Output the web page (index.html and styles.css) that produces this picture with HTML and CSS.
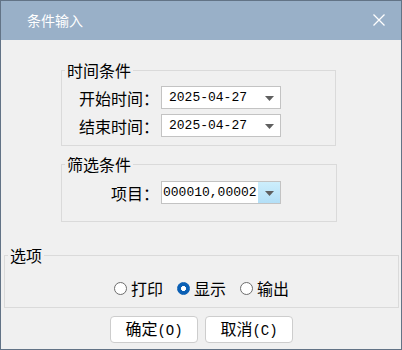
FILE: index.html
```html
<!DOCTYPE html>
<html lang="zh-CN">
<head>
  <meta charset="UTF-8">
  <meta name="viewport" content="width=device-width, initial-scale=1.0">
  <title>条件输入</title>
  <link rel="stylesheet" href="styles.css">
</head>
<body>
  <div class="dialog">
    <div class="titlebar">
      <span class="title">条件输入</span>
      <svg class="close" width="12" height="12" viewBox="0 0 12 12">
        <path d="M0.5 0.5 L11.5 11.5 M11.5 0.5 L0.5 11.5" stroke="#fff" stroke-width="1.3" fill="none"/>
      </svg>
    </div>
    <div class="content">
      <fieldset class="group group-time">
        <legend>时间条件</legend>
        <div class="row">
          <label class="field-label">开始时间：</label>
          <div class="combo">
            <span class="combo-text">2025-04-27</span>
            <span class="combo-arrow"><svg width="9" height="5" viewBox="0 0 9 5"><polygon points="0,0 9,0 4.5,5" fill="#5f5f5f"/></svg></span>
          </div>
        </div>
        <div class="row">
          <label class="field-label">结束时间：</label>
          <div class="combo">
            <span class="combo-text">2025-04-27</span>
            <span class="combo-arrow"><svg width="9" height="5" viewBox="0 0 9 5"><polygon points="0,0 9,0 4.5,5" fill="#5f5f5f"/></svg></span>
          </div>
        </div>
      </fieldset>

      <fieldset class="group group-filter">
        <legend>筛选条件</legend>
        <div class="row">
          <label class="field-label">项目：</label>
          <div class="combo combo-multi">
            <span class="combo-text">000010,00002</span>
            <span class="combo-arrow hot"><svg width="9" height="5" viewBox="0 0 9 5"><polygon points="0,0 9,0 4.5,5" fill="#5f5f5f"/></svg></span>
          </div>
        </div>
      </fieldset>

      <fieldset class="group group-options">
        <legend>选项</legend>
        <div class="radios">
          <label class="radio-item"><span class="radio"></span>打印</label>
          <label class="radio-item"><span class="radio on"></span>显示</label>
          <label class="radio-item"><span class="radio"></span>输出</label>
        </div>
      </fieldset>

      <div class="buttons">
        <button class="btn">确定<span class="key">(O)</span></button>
        <button class="btn">取消<span class="key">(C)</span></button>
      </div>
    </div>
  </div>
</body>
</html>
```

FILE: styles.css
```css
body {
  margin: 0;
  font-family: "Noto Sans CJK SC", "Liberation Sans", sans-serif;
  color: #000;
}

.dialog {
  width: 402px;
  height: 350px;
  box-sizing: border-box;
  border: 1px solid #627386;
  background: #f0f0f0;
  display: flex;
  flex-direction: column;
}

.titlebar {
  height: 39px;
  flex: none;
  background: #99b0c8;
  display: flex;
  align-items: center;
  justify-content: space-between;
  padding: 0 16px 0 26px;
  color: #fff;
}

.title {
  font-size: 14px;
  line-height: 16px;
  margin-top: -2px;
}

.close {
  display: block;
  margin-top: -2px;
}

.content {
  flex: 1;
  display: flex;
  flex-direction: column;
  align-items: flex-start;
}

/* group boxes */
.group {
  margin: 0;
  border: 1px solid #dadada;
  padding: 0 3px;
  min-inline-size: 0;
  box-sizing: border-box;
}

.group legend {
  padding: 0 2px;
  font-size: 16px;
  line-height: 16px;
}

.group-time {
  margin: 22px 0 0 60px;
  width: 275px;
  padding-top: 8px;
  padding-bottom: 8px;
}

.group-filter {
  margin: 10px 0 0 60px;
  width: 276px;
  padding-top: 9px;
  padding-bottom: 17px;
}

.group-options {
  margin: 25px 0 0 3px;
  width: 395px;
  padding-top: 17px;
  padding-bottom: 11px;
}

.row {
  display: flex;
  align-items: center;
  height: 23px;
}

.row + .row {
  margin-top: 5px;
}

.field-label {
  width: 94px;
  text-align: right;
  font-size: 16px;
  line-height: 16px;
  margin-right: 2px;
  white-space: nowrap;
}

/* combo boxes */
.combo {
  width: 120px;
  height: 23px;
  box-sizing: border-box;
  border: 1px solid #c3c3c3;
  background: #fff;
  display: flex;
  align-items: stretch;
}

.combo-text {
  flex: 1;
  overflow: hidden;
  white-space: nowrap;
  padding-left: 7px;
  font-family: "Liberation Mono", monospace;
  font-size: 13px;
  line-height: 21px;
}

.combo-multi .combo-text {
  padding-left: 1px;
}

.combo-arrow {
  width: 22px;
  flex: none;
  display: flex;
  align-items: center;
  justify-content: center;
}

.combo-arrow svg {
  display: block;
  margin-top: 1px;
}

.combo-arrow.hot {
  background: linear-gradient(#cdeefc, #b3dff7);
}

/* radios */
.radios {
  display: flex;
  justify-content: center;
  gap: 14px;
  height: 16px;
  align-items: center;
}

.radio-item {
  display: flex;
  align-items: center;
  font-size: 16px;
  line-height: 16px;
}

.radio {
  width: 11px;
  height: 11px;
  border: 1px solid #6d6d6d;
  border-radius: 50%;
  background: #fff;
  margin-right: 4px;
  box-sizing: content-box;
}

.radio.on {
  border-color: #0a5fb4;
  background: radial-gradient(circle, #fff 0 2.2px, #0a5fb4 2.8px);
}

/* buttons */
.buttons {
  align-self: stretch;
  display: flex;
  justify-content: center;
  gap: 7px;
  margin-top: 8px;
  padding-left: 1px;
}

.btn {
  width: 88px;
  height: 27px;
  padding: 0;
  border: 1px solid #cdcdcd;
  border-radius: 4px;
  background: #fff;
  font-family: "Noto Sans CJK SC", sans-serif;
  font-size: 16px;
  line-height: 16px;
  color: #000;
}

.key {
  font-family: "Liberation Mono", monospace;
  font-size: 14px;
}
```
